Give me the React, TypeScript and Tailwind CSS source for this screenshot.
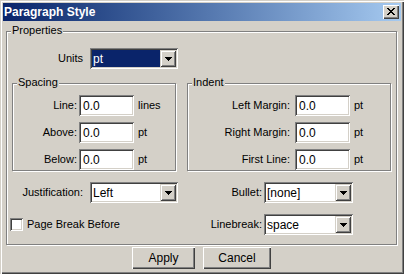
import React from "react";

const FONT = { fontFamily: '"Liberation Sans", Arial, sans-serif' };

function Arrow() {
  return (
    <svg width="7" height="4" viewBox="0 0 7 4" className="block">
      <path d="M0 0h7v1h-1v1h-1v1h-1v1h-1v-1h-1v-1h-1v-1h-1z" fill="#000" />
    </svg>
  );
}

function Select({ value, width, selected }: { value: string; width: string; selected?: boolean }) {
  return (
    <div
      className={`${width} h-[21px] p-[2px] bg-white shadow-[inset_1px_1px_0_#808080,inset_-1px_-1px_0_#fff,inset_2px_2px_0_#404040,inset_-2px_-2px_0_#d4d0c8]`}
    >
      <div className="flex h-full">
        <div
          className={
            selected
              ? "flex-1 flex items-center pl-[1px] bg-[#0a246a] text-white text-[12px]"
              : "flex-1 flex items-center pl-[1px] bg-white text-black text-[12px]"
          }
        >
          {value}
        </div>
        <div className="w-[16px] h-full bg-[#d4d0c8] flex items-center justify-center shadow-[inset_1px_1px_0_#d4d0c8,inset_-1px_-1px_0_#404040,inset_2px_2px_0_#fff,inset_-2px_-2px_0_#808080]">
          <Arrow />
        </div>
      </div>
    </div>
  );
}

function Input({ value }: { value: string }) {
  return (
    <div className="w-[55px] h-[21px] p-[2px] bg-white shadow-[inset_1px_1px_0_#808080,inset_-1px_-1px_0_#fff,inset_2px_2px_0_#404040,inset_-2px_-2px_0_#d4d0c8]">
      <div className="h-full flex items-center pl-[2px] text-[12px] bg-white">{value}</div>
    </div>
  );
}

function Group({ label, className, children }: { label: string; className: string; children?: React.ReactNode }) {
  return (
    <div className={`relative border border-[#808080] shadow-[1px_1px_0_#fff,inset_1px_1px_0_#fff] ${className}`}>
      <span className="absolute -top-[8px] left-[4px] px-[1px] leading-[13px] bg-[#d4d0c8]">{label}</span>
      {children}
    </div>
  );
}

function Row({ label, labelW, gap, unit }: { label: string; labelW: string; gap: string; unit: string }) {
  return (
    <div className="flex items-center h-[21px]">
      <div className={`${labelW} text-right`}>{label}</div>
      <div className={gap}>
        <Input value="0.0" />
      </div>
      <div className="ml-[4px]">{unit}</div>
    </div>
  );
}

function Button({ label, width }: { label: string; width: string }) {
  return (
    <div
      className={`${width} h-[22px] flex items-center justify-center bg-[#d4d0c8] text-[12px] shadow-[inset_1px_1px_0_#fff,inset_-1px_-1px_0_#404040,inset_-2px_-2px_0_#808080]`}
    >
      {label}
    </div>
  );
}

function CloseGlyph() {
  return (
    <svg width="8" height="7" viewBox="0 0 8 7" className="block">
      <path
        d="M0 0h2v1h-2z M6 0h2v1h-2z M1 1h2v1h-2z M5 1h2v1h-2z M2 2h4v1h-4z M3 3h2v1h-2z M2 4h4v1h-4z M1 5h2v1h-2z M5 5h2v1h-2z M0 6h2v1h-2z M6 6h2v1h-2z"
        fill="#000"
      />
    </svg>
  );
}

export default function App() {
  return (
    <div
      style={FONT}
      className="w-[404px] h-[274px] bg-[#d4d0c8] text-black text-[11px] flex flex-col pt-[3px] px-[3px] shadow-[inset_1px_1px_0_#d4d0c8,inset_2px_2px_0_#fff,inset_-1px_-1px_0_#404040,inset_-2px_-2px_0_#808080]"
    >
      {/* Title bar */}
      <div className="h-[18px] w-[398px] flex items-center justify-between pl-[1px] pr-[2px] bg-linear-to-r from-[#0a246a] to-[#a6caf0]">
        <span className="text-white font-bold text-[12px] leading-[18px]">Paragraph Style</span>
        <div className="w-[16px] h-[14px] bg-[#d4d0c8] pl-[4px] pt-[3px] shadow-[inset_1px_1px_0_#fff,inset_-1px_-1px_0_#404040,inset_-2px_-2px_0_#808080]">
          <CloseGlyph />
        </div>
      </div>

      {/* Properties */}
      <Group label="Properties" className="mt-[10px] ml-[3px] w-[391px] h-[214px] pt-[16px]">
        <div className="flex items-center h-[21px]">
          <div className="w-[76px] text-right">Units</div>
          <div className="ml-[7px]">
            <Select value="pt" width="w-[88px]" selected />
          </div>
        </div>

        <div className="flex mt-[14px] ml-[5px] gap-[11px]">
          <Group label="Spacing" className="w-[164px] h-[88px] pt-[11px]">
            <div className="flex flex-col gap-[6px]">
              <Row label="Line:" labelW="w-[64px]" gap="ml-[2px]" unit="lines" />
              <Row label="Above:" labelW="w-[64px]" gap="ml-[2px]" unit="pt" />
              <Row label="Below:" labelW="w-[64px]" gap="ml-[2px]" unit="pt" />
            </div>
          </Group>
          <Group label="Indent" className="w-[204px] h-[88px] pt-[11px]">
            <div className="flex flex-col gap-[6px]">
              <Row label="Left Margin:" labelW="w-[102px]" gap="ml-[5px]" unit="pt" />
              <Row label="Right Margin:" labelW="w-[102px]" gap="ml-[5px]" unit="pt" />
              <Row label="First Line:" labelW="w-[102px]" gap="ml-[5px]" unit="pt" />
            </div>
          </Group>
        </div>

        <div className="flex items-center h-[21px] mt-[11px]">
          <div className="w-[76px] text-right">Justification:</div>
          <div className="ml-[7px]">
            <Select value="Left" width="w-[88px]" />
          </div>
          <div className="w-[84px] text-right">Bullet:</div>
          <div className="ml-[2px]">
            <Select value="[none]" width="w-[89px]" />
          </div>
        </div>

        <div className="flex items-center h-[21px] mt-[11px]">
          <div className="w-[171px] flex items-center">
            <div className="ml-[3px] w-[13px] h-[13px] bg-white shadow-[inset_1px_1px_0_#808080,inset_-1px_-1px_0_#fff,inset_2px_2px_0_#404040,inset_-2px_-2px_0_#d4d0c8]" />
            <span className="ml-[4px]">Page Break Before</span>
          </div>
          <div className="w-[84px] text-right">Linebreak:</div>
          <div className="ml-[2px]">
            <Select value="space" width="w-[89px]" />
          </div>
        </div>
      </Group>

      {/* Buttons */}
      <div className="flex mt-[2px] ml-[129px] gap-[8px]">
        <Button label="Apply" width="w-[63px]" />
        <Button label="Cancel" width="w-[68px]" />
      </div>
    </div>
  );
}
